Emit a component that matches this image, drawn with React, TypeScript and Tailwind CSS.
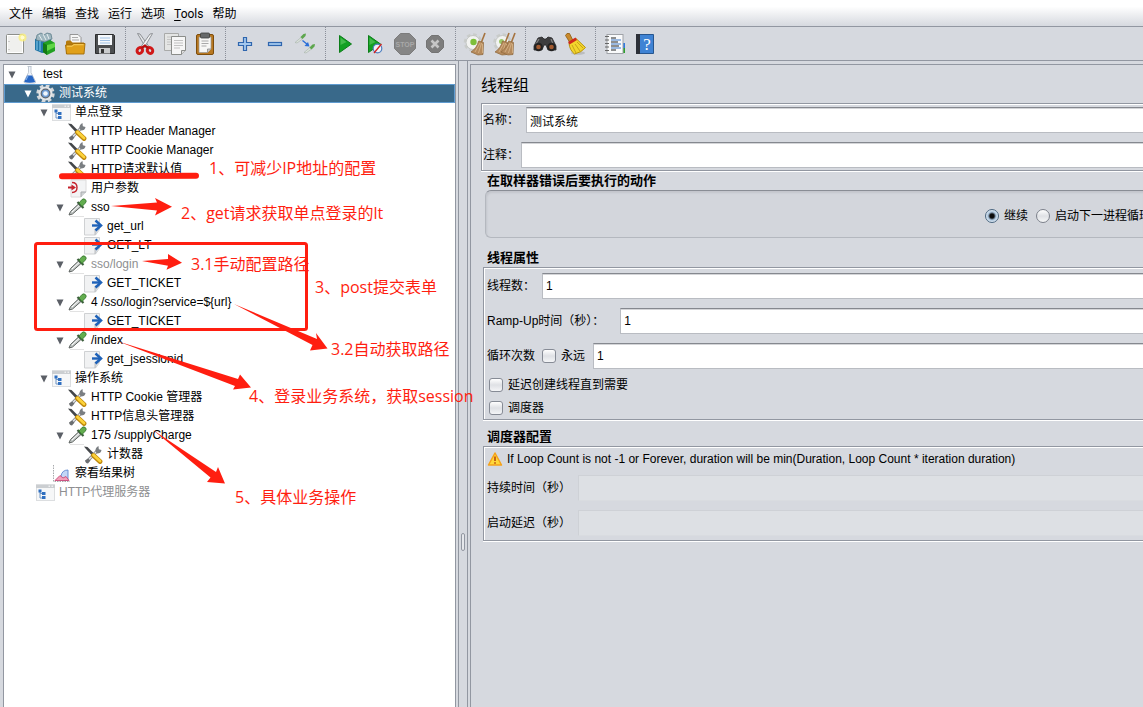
import React from "react";
import type { ReactNode } from "react";

type IconProps = { children: ReactNode };

function ToolSvg({ children }: IconProps) {
  return (
    <svg viewBox="0 0 24 24" className="size-6" aria-hidden="true">
      {children}
    </svg>
  );
}

function NodeSvg({ children }: IconProps) {
  return (
    <svg viewBox="0 0 19 19" className="size-[19px] shrink-0" aria-hidden="true">
      {children}
    </svg>
  );
}

/* ---------- toolbar icons ---------- */

const NewIcon = () => (
  <ToolSvg>
    <rect x="3.5" y="2.5" width="17" height="19" rx="1" fill="#f0f0ee" stroke="#8d8f8b" />
    <rect x="4.5" y="3.5" width="15" height="17" fill="none" stroke="#fff" />
    <path d="M6 9v1M6 17v1" stroke="#aaa" />
    <circle cx="19.5" cy="5.5" r="4" fill="#fbf07a" opacity=".8" />
    <circle cx="19.5" cy="5.5" r="2" fill="#fffbd0" />
  </ToolSvg>
);

const TemplatesIcon = () => (
  <ToolSvg>
    <path d="M2 7l8-2 8 1v14l-9 1-7-3z" fill="#2377a8" />
    <path d="M4 3l4-2 3 2 3-2 4 1 1 5-7 3-9-2z" fill="#9fb6bf" stroke="#5e7f8c" strokeWidth=".8" />
    <path d="M6 3l3 5M10 2l3 6M14 2l2 5" stroke="#e6eef0" />
    <path d="M4 9v9M7 9v10" stroke="#6bb4dc" strokeWidth="1.4" />
    <path d="M10 11l7-3 5 3v8l-8 4-4-3z" fill="#22a022" />
    <path d="M10 11l4 2v10l-4-3z" fill="#137a13" />
    <path d="M14 13l8-2v4l-8 4z" fill="#5fd645" />
  </ToolSvg>
);

const OpenIcon = () => (
  <ToolSvg>
    <path d="M7 2.500h8l3 3v9H7z" fill="#f6f6f6" stroke="#8c8c8c" strokeWidth=".9" />
    <path d="M9 5.500h6M9 8h7" stroke="#aaa" />
    <path d="M3 10q0-1.500 1.500-1.500h3l2 2H21V22H3z" fill="#b57a0c" />
    <path d="M2.500 13h6l2-1.500h11.500l-1 10.500H3.500z" fill="#e0a01a" stroke="#a26c08" strokeWidth=".9" />
    <path d="M4 14.200h5l2-1.500h9.500" stroke="#f8cf62" fill="none" />
  </ToolSvg>
);

const SaveIcon = () => (
  <ToolSvg>
    <path d="M2.500 2.500h18l1 1v18h-19z" fill="#4c4e50" stroke="#2c2d2e" />
    <rect x="5" y="3" width="14" height="10" fill="#f5f8fb" />
    <path d="M7 6h10M7 8.500h10M7 11h10" stroke="#9fc0e4" />
    <rect x="6" y="16" width="11" height="5.500" fill="#c9cbcd" />
    <rect x="8" y="17" width="3" height="4" fill="#333" />
  </ToolSvg>
);

const CutIcon = () => (
  <ToolSvg>
    <path d="M4.500 1.500l2.500.5 8.500 12-2.500 2z" fill="#e4e6e8" stroke="#85888c" strokeWidth=".9" />
    <path d="M19.500 1.500l-2.500.5-8.500 12 2.500 2z" fill="#f3f4f5" stroke="#85888c" strokeWidth=".9" />
    <ellipse cx="6.800" cy="18.500" rx="2.600" ry="3" fill="none" stroke="#d01818" strokeWidth="3" transform="rotate(35 6.800 18.500)" />
    <ellipse cx="17" cy="18.500" rx="2.600" ry="3" fill="none" stroke="#d01818" strokeWidth="3" transform="rotate(-35 17 18.500)" />
    <path d="M8.500 16l3.400-2.500 3.400 2.500" stroke="#b81010" strokeWidth="2.200" fill="none" />
  </ToolSvg>
);

const CopyIcon = () => (
  <ToolSvg>
    <path d="M1.500 1.500h14v17h-14z" fill="#e4e5e4" stroke="#a9aaa9" />
    <path d="M4 5h9M4 7.500h9M4 10h5M4 12.500h5" stroke="#c4c4c4" />
    <path d="M8.500 4.500h14v14l-4 4h-10z" fill="#f6f6f6" stroke="#8b8d8a" />
    <path d="M11 8.500h9M11 11h9M11 13.500h9M11 16h6" stroke="#c2c2c2" />
    <path d="M22.500 18.500h-4v4" fill="#ddd" stroke="#8b8d8a" />
  </ToolSvg>
);

const PasteIcon = () => (
  <ToolSvg>
    <rect x="3.500" y="2.500" width="17" height="20" rx="1.500" fill="#b87820" stroke="#7d4d0c" />
    <path d="M6 5h12v12l-3.500 3.500H6z" fill="#f7f7f5" stroke="#999" strokeWidth=".7" />
    <rect x="7.500" y="1" width="9" height="5" rx="1" fill="#66696a" stroke="#3e4040" strokeWidth=".8" />
    <path d="M8.500 9h7M8.500 11.500h7M8.500 14h5" stroke="#a9a9a9" />
    <path d="M18 17h-3.500v3.500" fill="#ccc" stroke="#888" strokeWidth=".8" />
  </ToolSvg>
);

const PlusIcon = () => (
  <ToolSvg>
    <path d="M10.500 5.500h3v5h5v3h-5v5h-3v-5h-5v-3h5z" fill="#a4c8ee" stroke="#2f66ae" strokeWidth="1.200" />
  </ToolSvg>
);

const MinusIcon = () => (
  <ToolSvg>
    <rect x="5.500" y="10.500" width="13" height="3" fill="#a4c8ee" stroke="#2f66ae" strokeWidth="1.200" />
  </ToolSvg>
);

const ToggleIcon = () => (
  <ToolSvg>
    <path d="M2 10.500l6-5 1.500 1.500-5.500 4z" fill="#dbe2dc" stroke="#a5b0a8" strokeWidth=".6" />
    <path d="M7.500 5l3-3 2.500-.5L12.500 4 9.500 7z" fill="#5da64d" />
    <path d="M9.500 8.500l5 4" stroke="#2b6fd8" strokeWidth="1.500" />
    <path d="M16.500 14.500l-5-.5 3.500-4z" fill="#2b6fd8" />
    <path d="M11 20.500l6-5 1.500 1.500-5.500 4z" fill="#dbe2dc" stroke="#a5b0a8" strokeWidth=".6" />
    <path d="M16.500 15.500l3-3 2.500-.5-.5 2.500-3 3z" fill="#5da64d" />
  </ToolSvg>
);

const StartIcon = () => (
  <ToolSvg>
    <path d="M6.500 3.500L18.500 12l-12 8.500z" fill="#12a022" stroke="#0b7d18" />
    <path d="M7.500 5.500l6 4.500-6 3z" fill="#58c65c" opacity=".7" />
  </ToolSvg>
);

const StartNoPauseIcon = () => (
  <ToolSvg>
    <path d="M5.500 3.500L17.500 12l-12 8.500z" fill="#12a022" stroke="#0b7d18" />
    <path d="M6.500 5.500l6 4.500-6 3z" fill="#58c65c" opacity=".7" />
    <circle cx="14.500" cy="16.500" r="4.300" fill="#eef2fa" stroke="#4f7fc0" strokeWidth="1.200" />
    <path d="M11 21l7.500-9" stroke="#d42020" strokeWidth="1.300" />
  </ToolSvg>
);

const StopIcon = () => (
  <ToolSvg>
    <path d="M7.500 1.500h9l6 6v9l-6 6h-9l-6-6v-9z" fill="#868686" stroke="#7c7c7c" />
    <text x="12" y="14.800" textAnchor="middle" className="fill-[#a9a9a9] font-['Liberation_Sans',sans-serif] text-[7px] font-bold">
      STOP
    </text>
  </ToolSvg>
);

const ShutdownIcon = () => (
  <ToolSvg>
    <path d="M8.500 3.500h7l5 5v7l-5 5h-7l-5-5v-7z" fill="#7d7d7d" stroke="#747474" />
    <path d="M8.500 8.500l7 7M15.500 8.500l-7 7" stroke="#c6c6c6" strokeWidth="2.600" />
  </ToolSvg>
);

const Bristles = ({ x }: { x: number }) => (
  <g>
    <path d={`M${x + 8} 1L${x + 4.5} 10`} stroke="#a5733f" strokeWidth="1.600" />
    <path d={`M${x + 1.5} 9l5 1.500-.5 12-5 .5L${x - 6} 20q6-4 7.500-11z`} fill="#b58a5c" stroke="#8d6538" strokeWidth=".7" />
    <path d={`M${x + 3} 11l-5 9M${x + 4.5} 11l-3 10M${x + 5.5} 12v9`} stroke="#d9b88c" strokeWidth=".8" />
  </g>
);

const ClearIcon = () => (
  <ToolSvg>
    <circle cx="10" cy="10.500" r="7.800" fill="none" stroke="#c9ccca" strokeWidth="3" strokeDasharray="3.500 2.600" />
    <circle cx="10" cy="10.500" r="7" fill="#f2f3f1" stroke="#c3c6c4" />
    <circle cx="10.500" cy="10" r="3.200" fill="#7dbf3a" />
    <Bristles x={14} />
  </ToolSvg>
);

const ClearAllIcon = () => (
  <ToolSvg>
    <circle cx="9.500" cy="10.500" r="7.800" fill="none" stroke="#c9ccca" strokeWidth="3" strokeDasharray="3.500 2.600" />
    <circle cx="9.500" cy="10.500" r="7" fill="#f2f3f1" stroke="#c3c6c4" />
    <circle cx="8.500" cy="9.500" r="2.500" fill="#9cc86a" />
    <Bristles x={8} />
    <Bristles x={14} />
  </ToolSvg>
);

const SearchIcon = () => (
  <ToolSvg>
    <path d="M5 6l4-1 2 2h2l2-2 4 1 4 8v4h-8l-2-5h-2l-2 5H1v-4z" fill="#3d3d3e" stroke="#262627" strokeWidth=".8" />
    <path d="M6 7l-3 5M18 7l2 5" stroke="#858585" strokeWidth="1.200" />
    <circle cx="5.500" cy="15" r="4.300" fill="#222" />
    <circle cx="18.500" cy="15" r="4.300" fill="#222" />
    <circle cx="5.500" cy="15" r="2.300" fill="#a35a2f" />
    <circle cx="18.500" cy="15" r="2.300" fill="#a35a2f" />
  </ToolSvg>
);

const ResetSearchIcon = () => (
  <ToolSvg>
    <ellipse cx="15" cy="21" rx="7" ry="1.800" fill="#aaa" opacity=".6" />
    <path d="M2.500 3.500q1-3 4-2l3.500 7-3.500 1.500z" fill="#c98a2c" stroke="#8d5a12" strokeWidth=".8" />
    <path d="M6 11l7-4.500 9.500 9q-4 5-11 6.500Q6.500 18 6 11z" fill="#f3d52c" stroke="#b7930f" />
    <path d="M9 13l4 8M12 12l5 7M14 10l6 6" stroke="#c5a41a" />
    <path d="M5 10l7.500-4.500 1.500 2.500-7.500 4.500z" fill="#cf2a1c" />
  </ToolSvg>
);

const FunctionIcon = () => (
  <ToolSvg>
    <path d="M19 11h3v5h-3z" fill="#2f7be0" />
    <path d="M19 16h3v5h-3z" fill="#2da02d" />
    <rect x="4" y="2.500" width="16" height="19" fill="#f9fafb" stroke="#a0a3a8" />
    <path d="M8 6h5M8 10h7M8 14h8M8 18h5" stroke="#222" strokeWidth="1.200" />
    <path d="M8 8h10M8 12h10M8 16h10" stroke="#3c78c8" strokeWidth="1.100" />
    <path d="M2 4.500h4M2 8h4M2 11.500h4M2 15h4M2 18.500h4" stroke="#666" strokeWidth="1.200" />
  </ToolSvg>
);

const HelpIcon = () => (
  <ToolSvg>
    <path d="M3.500 2.500h17v19h-17z" fill="#3f83d4" stroke="#27568f" />
    <path d="M3 2h4v20H3z" fill="#2c3038" />
    <text x="14" y="17.500" textAnchor="middle" className="fill-white font-['Liberation_Serif',serif] text-[17px]">
      ?
    </text>
  </ToolSvg>
);

/* ---------- tree icons ---------- */

const FlaskIcon = () => (
  <NodeSvg>
    <path d="M7.500 1.500h4M8.500 1.500v6L4 16.500q0 1.500 1.500 1.500h9q1.500 0 1-1.500L11 7.500v-6" fill="#eef3fa" stroke="#b4bcc8" strokeWidth=".8" />
    <path d="M7.200 10.500h5l3 6.500q-5.500 1.500-11 0z" fill="#2867c4" />
    <path d="M8 11l-2 4" stroke="#8db8f0" />
  </NodeSvg>
);

const GearIcon = () => (
  <NodeSvg>
    <circle cx="9.500" cy="9.500" r="7.700" fill="none" stroke="#d4d7da" strokeWidth="3" strokeDasharray="3.600 2.448" />
    <circle cx="9.500" cy="9.500" r="7" fill="#e4e6e8" />
    <circle cx="9.500" cy="9.500" r="4.300" fill="#6d9bd4" stroke="#5c6570" strokeWidth="1.200" />
    <circle cx="9.500" cy="9.500" r="2.300" fill="#f0f5fb" />
  </NodeSvg>
);

const ControllerIcon = () => (
  <NodeSvg>
    <rect x=".5" y="2" width="18" height="15.500" fill="#f6f7f8" stroke="#dcdee0" />
    <path d="M0 1.500h19v3.500H0z" fill="#cbced1" />
    <path d="M12.500 3.200h1.500M15.500 3.200h1.500" stroke="#fff" />
    <path d="M4 8v7h4M4 10.500h4" stroke="#6e95c4" fill="none" />
    <rect x="2.500" y="6.500" width="3" height="3" fill="#2f6fc0" />
    <rect x="6" y="9" width="3.500" height="3" fill="#2f6fc0" />
    <rect x="6" y="13" width="3.500" height="3" fill="#2f6fc0" />
  </NodeSvg>
);

const ToolsIcon = () => (
  <NodeSvg>
    <path d="M14.500 4.500L3.500 16" stroke="#85888b" strokeWidth="3.200" />
    <path d="M14 5L4 15.500" stroke="#e6e8ea" strokeWidth="1.300" />
    <path d="M11.500 6.500q-.5-4 3-5.500l.3 3.200 2.700.8Q17 8.500 13 8.500z" fill="#7a7e82" />
    <path d="M1 15.500l3-2 2.500 2-2.500 3q-2.500 0-3-3z" fill="#6b6e71" />
    <path d="M0 1.500l3.500.5 6 6-2 2L2 4z" fill="#44474a" />
    <path d="M9.500 10.500l6.500 6" stroke="#bd860a" strokeWidth="4.800" strokeLinecap="round" />
    <path d="M9.500 10l6.500 6" stroke="#fcd23a" strokeWidth="2.800" strokeLinecap="round" />
  </NodeSvg>
);

const UserParamIcon = () => (
  <NodeSvg>
    <path d="M3 1h15v12l-5 5H3z" fill="#f3f4f5" stroke="#dcdcdc" />
    <path d="M18 13h-5v5" fill="#cfd2d4" stroke="#a8abad" />
    <path d="M0 8.500h6" stroke="#c4232c" strokeWidth="2" />
    <path d="M3.500 5.500L8 8.500l-4.500 3z" fill="#c4232c" />
    <path d="M4 3.500q5 0 5 5t-5 5" fill="none" stroke="#c4232c" strokeWidth="1.400" />
  </NodeSvg>
);

const SamplerIcon = () => (
  <NodeSvg>
    <path d="M2 18.500h14" stroke="#d5d5d5" strokeWidth=".7" />
    <path d="M1 17l1.500-3.500 8-7.500L13 8.500 4.500 16z" fill="#c3c8c6" stroke="#5d6260" strokeWidth="1" />
    <path d="M4 14l7-6.500" stroke="#fff" />
    <path d="M9.500 4l6 6" stroke="#3b5d3b" strokeWidth="2.200" />
    <path d="M11 5l3-3.500q2-1.500 3.800.5 1 1.800-.6 3.200L14 8.500z" fill="#62ad4e" stroke="#3b7a33" strokeWidth=".9" />
  </NodeSvg>
);

const ExtractorIcon = () => (
  <NodeSvg>
    <path d="M.5 1.500h15v11l-4 5.500H.5z" fill="#f1f2f3" stroke="#cfd1d3" />
    <path d="M15 12h-4v6" fill="#d5d8da" stroke="#b0b3b6" strokeWidth=".8" />
    <path d="M8 8.500h8" stroke="#1f62b8" strokeWidth="2.400" />
    <path d="M11.500 3.500l5.500 5-5.500 5" fill="none" stroke="#1f62b8" strokeWidth="2.500" />
  </NodeSvg>
);

const ResultsIcon = () => (
  <NodeSvg>
    <path d="M1.500 1v16.500H18" fill="none" stroke="#a7a9ac" strokeDasharray="1.500 1" />
    <path d="M9 12q1-6 7-6v10H9z" fill="#c3d6f6" stroke="#5c86d0" strokeWidth=".9" />
    <path d="M3 16.500l5-5 3 2.500 3-1.500 3 4z" fill="#f2a0ba" stroke="#c94a78" strokeWidth=".9" />
  </NodeSvg>
);

/* ---------- menu bar and toolbar ---------- */

const menus = ["文件", "编辑", "查找", "运行", "选项", "Tools", "帮助"];

function MenuBar() {
  return (
    <nav className="flex h-[27px] shrink-0 items-center gap-[9px] border-b border-[#9297a1] bg-linear-to-b from-white from-25% to-[#d6d9df] pt-0.5 pl-[9px] font-['Roboto','Noto_Sans_CJK_SC',sans-serif]">
      {menus.map((name) => (
        <button key={name} type="button" className="leading-4">
          {name === "Tools" ? (
            <>
              <span className="underline underline-offset-2">T</span>ools
            </>
          ) : (
            name
          )}
        </button>
      ))}
    </nav>
  );
}

const toolGroups: [string, () => React.JSX.Element][][] = [
  [["新建", NewIcon], ["模板", TemplatesIcon], ["打开", OpenIcon], ["保存", SaveIcon]],
  [["剪切", CutIcon], ["复制", CopyIcon], ["粘贴", PasteIcon]],
  [["展开", PlusIcon], ["收起", MinusIcon], ["切换", ToggleIcon]],
  [["启动", StartIcon], ["不停顿开始", StartNoPauseIcon], ["停止", StopIcon], ["关闭", ShutdownIcon]],
  [["清除", ClearIcon], ["清除全部", ClearAllIcon]],
  [["查找", SearchIcon], ["重置查找", ResetSearchIcon]],
  [["函数助手", FunctionIcon], ["帮助", HelpIcon]],
];

function ToolBar() {
  return (
    <div role="toolbar" className="flex h-[34px] shrink-0 border-b border-[#9297a1]">
      {toolGroups.map((group, i) => (
        <div key={i} className="flex">
          {i > 0 && <div className="mr-1 ml-[5px] w-px border-l border-dotted border-[#8a8f99]" />}
          {group.map(([label, Icon]) => (
            <button key={label} type="button" aria-label={label} className="flex w-[30px] items-center justify-center">
              <Icon />
            </button>
          ))}
        </div>
      ))}
    </div>
  );
}

/* ---------- test plan tree ---------- */

type Node = { level: number; text: string; icon: () => React.JSX.Element; open?: boolean; selected?: boolean; disabled?: boolean };

const nodes: Node[] = [
  { level: 0, text: "test", icon: FlaskIcon, open: true },
  { level: 1, text: "测试系统", icon: GearIcon, open: true, selected: true },
  { level: 2, text: "单点登录", icon: ControllerIcon, open: true },
  { level: 3, text: "HTTP Header Manager", icon: ToolsIcon },
  { level: 3, text: "HTTP Cookie Manager", icon: ToolsIcon },
  { level: 3, text: "HTTP请求默认值", icon: ToolsIcon },
  { level: 3, text: "用户参数", icon: UserParamIcon },
  { level: 3, text: "sso", icon: SamplerIcon, open: true },
  { level: 4, text: "get_url", icon: ExtractorIcon },
  { level: 4, text: "GET_LT", icon: ExtractorIcon },
  { level: 3, text: "sso/login", icon: SamplerIcon, open: true, disabled: true },
  { level: 4, text: "GET_TICKET", icon: ExtractorIcon },
  { level: 3, text: "4 /sso/login?service=${url}", icon: SamplerIcon, open: true },
  { level: 4, text: "GET_TICKET", icon: ExtractorIcon },
  { level: 3, text: "/index", icon: SamplerIcon, open: true },
  { level: 4, text: "get_jsessionid", icon: ExtractorIcon },
  { level: 2, text: "操作系统", icon: ControllerIcon, open: true },
  { level: 3, text: "HTTP Cookie 管理器", icon: ToolsIcon },
  { level: 3, text: "HTTP信息头管理器", icon: ToolsIcon },
  { level: 3, text: "175 /supplyCharge", icon: SamplerIcon, open: true },
  { level: 4, text: "计数器", icon: ToolsIcon },
  { level: 2, text: "察看结果树", icon: ResultsIcon },
  { level: 1, text: "HTTP代理服务器", icon: ControllerIcon, disabled: true },
];

const indents = ["pl-0", "pl-4", "pl-8", "pl-12", "pl-16"];

function Tree() {
  return (
    <ul role="tree" className="mt-[3px] ml-[3px] w-[453px] shrink-0 overflow-hidden border border-b-0 border-[#9297a1] bg-white">
      {nodes.map((node, i) => (
        <li
          key={i}
          role="treeitem"
          aria-level={node.level + 1}
          aria-selected={!!node.selected}
          className={`flex h-[19px] items-center ${indents[node.level]} ${
            node.selected ? "bg-[#39698a] text-white outline outline-offset-[-1px] outline-[#5f9bd0]" : node.disabled ? "text-[#8e8f91]" : ""
          }`}
        >
          <span className="flex w-4 shrink-0 justify-center">
            {node.open && (
              <button type="button" aria-label="收起" aria-expanded="true">
                <svg viewBox="0 0 8 8" className="size-2">
                  <path d="M.5.500h7L4 7.500z" fill={node.selected ? "#fff" : "#5b5f66"} />
                </svg>
              </button>
            )}
          </span>
          <node.icon />
          <span className="pl-1 leading-[19px] whitespace-nowrap">{node.text}</span>
        </li>
      ))}
    </ul>
  );
}

/* ---------- thread group form ---------- */

const etched = "border border-r-0 border-[#9297a1] shadow-[inset_1px_1px_0_#fff,0_1px_0_#fff]";

const checkbox =
  "size-3.5 shrink-0 appearance-none rounded-[3px] border border-[#868b95] bg-linear-to-b from-white via-[#dfe1e5] to-[#f4f5f7] checked:from-[#a9c0d4] checked:to-[#6c91b3]";

const radio =
  "size-3.5 shrink-0 appearance-none rounded-full border border-[#7c818b] bg-linear-to-b from-white via-[#dfe1e5] to-[#f6f7f8] checked:border-[#4a6680] checked:bg-[radial-gradient(circle,#0b0b0b_0,#0b0b0b_2px,#a9c3dc_4px,#dfeaf4_6px)]";

type FieldProps = { id: string; label: string; gap: string; value?: string; disabled?: boolean; middle?: ReactNode };

function Field({ id, label, gap, value = "", disabled = false, middle }: FieldProps) {
  return (
    <div className="flex h-[26px] items-center">
      <label htmlFor={id} className="shrink-0 whitespace-nowrap">
        {label}
      </label>
      {middle}
      <input
        id={id}
        type="text"
        defaultValue={value}
        disabled={disabled}
        className={`h-full min-w-0 grow rounded-none border border-r-0 pl-[3px] ${gap} ${
          disabled
            ? "border-[#ced1d6] border-b-[#d9dce0] bg-[#dde0e4]"
            : "border-[#b9bcc2] border-t-[#85888f] bg-white shadow-[inset_0_1px_0_#d4d5d8]"
        }`}
      />
    </div>
  );
}

function ThreadGroup() {
  return (
    <main className="mt-[3px] ml-[2px] min-w-0 grow overflow-hidden border-t border-l border-[#9297a1] pl-2.5">
      <h1 className="h-[38px] pt-1 text-base leading-[34px]">线程组</h1>

      <div className={`flex flex-col gap-[9px] pt-[3px] pb-0.5 pl-px ${etched}`}>
        <Field id="name" label="名称：" gap="ml-[7px]" value="测试系统" />
        <Field id="comments" label="注释：" gap="ml-0.5" />
      </div>

      <h2 className="h-[19px] pl-1.5 text-[13px] leading-5 font-bold">在取样器错误后要执行的动作</h2>
      <fieldset className="ml-1 h-12 overflow-hidden rounded-l-md border border-r-0 border-[#b4b8bf] border-t-[#898d95] bg-[#d3d6dc] shadow-[inset_1px_2px_2px_#c3c6cc]">
        <div className="-mr-2 flex h-full items-center justify-end gap-2 pt-1">
          <label className="flex items-center gap-[5px] whitespace-nowrap">
            <input type="radio" name="onError" defaultChecked className={radio} />
            继续
          </label>
          <label className="flex items-center gap-[5px] whitespace-nowrap">
            <input type="radio" name="onError" className={radio} />
            启动下一进程循环
          </label>
        </div>
      </fieldset>

      <h2 className="h-[29px] pt-[11px] pl-1.5 text-[13px] leading-[18px] font-bold">线程属性</h2>
      <div className={`ml-0.5 pt-[5px] pl-[3px] ${etched}`}>
        <div className="flex flex-col gap-[9px]">
          <Field id="threads" label="线程数：" gap="ml-[7px]" value="1" />
          <Field id="rampUp" label="Ramp-Up时间（秒）：" gap="ml-4" value="1" />
          <Field
            id="loops"
            label="循环次数"
            gap="ml-2"
            value="1"
            middle={
              <label className="ml-[7px] flex shrink-0 items-center gap-[5px]">
                <input type="checkbox" className={checkbox} />
                永远
              </label>
            }
          />
        </div>
        <div className="mt-[5px] flex flex-col gap-px pl-0.5">
          <label className="flex h-[22px] items-center gap-[5px]">
            <input type="checkbox" className={checkbox} />
            延迟创建线程直到需要
          </label>
          <label className="flex h-[22px] items-center gap-[5px]">
            <input type="checkbox" className={checkbox} />
            调度器
          </label>
        </div>
      </div>

      <h2 className="h-[26px] pt-2 pl-1.5 text-[13px] leading-[18px] font-bold">调度器配置</h2>
      <div className={`ml-0.5 pb-1 pl-[3px] ${etched}`}>
        <p className="mb-1 flex h-6 items-center gap-1 whitespace-nowrap">
          <svg viewBox="0 0 16 16" className="size-4" aria-hidden="true">
            <path d="M8 2L14.500 14H1.500z" fill="#ffd83a" stroke="#f5a21a" strokeWidth="1.500" strokeLinejoin="round" />
            <path d="M8 5.500v4.500M8 11.200v1.600" stroke="#b8480c" strokeWidth="1.600" />
          </svg>
          If Loop Count is not -1 or Forever, duration will be min(Duration, Loop Count * iteration duration)
        </p>
        <div className="flex flex-col gap-[9px]">
          <Field id="duration" label="持续时间（秒）" gap="ml-[7px]" disabled />
          <Field id="delay" label="启动延迟（秒）" gap="ml-[7px]" disabled />
        </div>
      </div>
    </main>
  );
}

/* ---------- red notes drawn over the window ---------- */

const note = "absolute leading-6 whitespace-nowrap";

function Notes() {
  return (
    <div className="pointer-events-none absolute inset-0 font-['Open_Sans','Noto_Sans_CJK_SC',sans-serif] text-base text-[#ff1e10]">
      <svg width="480" height="520" viewBox="0 0 480 520" className="absolute top-0 left-0" fill="#ff1e10" aria-hidden="true">
        <rect x="35.500" y="243.500" width="271" height="86" rx="2" fill="none" stroke="#ff1e10" strokeWidth="3" />
        <path d="M62 176.300L196 175.800" stroke="#ff1e10" strokeWidth="6" strokeLinecap="round" />
        <path d="M111 206l46-3.500-2-4.500 17 8.700-17 8.800 2-5z" />
        <path d="M142 261l26-2v-5l14 8.700-15.500 7 1.500-4z" />
        <path d="M234 304L317 339l-1-6 11.500 15.500-17.500 2 2.500-5.500z" />
        <path d="M117 341L238 379l2-4.500 11 13-18 2 2-3.500z" />
        <path d="M153 430L216 472l2-5 7 16.500-18-1.500 3.500-4.500z" />
      </svg>
      <span className={`${note} top-[156px] left-[209px]`}>1、可减少IP地址的配置</span>
      <span className={`${note} top-[201px] left-[181px]`}>2、get请求获取单点登录的lt</span>
      <span className={`${note} top-[252px] left-[191px]`}>3.1手动配置路径</span>
      <span className={`${note} top-[275px] left-[315px]`}>3、post提交表单</span>
      <span className={`${note} top-[337px] left-[331px]`}>3.2自动获取路径</span>
      <span className={`${note} top-[384px] left-[249px]`}>4、登录业务系统，获取session</span>
      <span className={`${note} top-[485px] left-[235px]`}>5、具体业务操作</span>
    </div>
  );
}

export default function App() {
  return (
    <div className="relative flex h-screen flex-col overflow-hidden bg-[#d6d9df] font-['Liberation_Sans','Noto_Sans_CJK_SC',sans-serif] text-xs text-black">
      <MenuBar />
      <ToolBar />
      <div className="flex min-h-0 grow">
        <Tree />
        <div className="relative ml-0.5 w-2.5 shrink-0 border-x border-[#9297a1]">
          <div className="absolute top-[73%] left-0.5 h-[18px] w-1 rounded-sm border border-[#9297a1] bg-[#e6e8ec]" />
        </div>
        <ThreadGroup />
      </div>
      <Notes />
    </div>
  );
}
